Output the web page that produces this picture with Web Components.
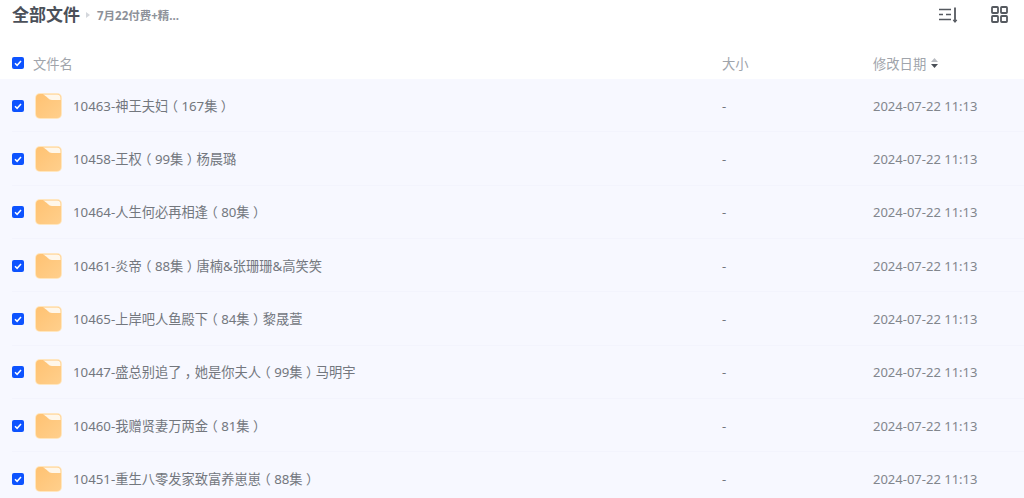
<!DOCTYPE html>
<html lang="zh">
<head>
<meta charset="utf-8">
<title>全部文件</title>
<style>
  html, body { margin: 0; height: 498px; overflow: hidden; background: #fff; }
  body { font-family: "Noto Sans", "Noto Sans CJK SC", sans-serif; }
</style>
</head>
<body>
<file-page></file-page>

<script>
const CHECK = `<svg width="12" height="12" viewBox="0 0 12 12" style="display:block">
  <rect width="12" height="12" rx="2" fill="#0d53ff"/>
  <path d="M3 6.2 5.1 8.3 9 3.9" fill="none" stroke="#fff" stroke-width="1.5"/>
</svg>`;

class FileHeader extends HTMLElement {
  constructor() {
    super();
    this.attachShadow({ mode: 'open' });
    this.shadowRoot.innerHTML = `
      <style>
        :host { display: flex; align-items: center; height: 29px; padding: 0 16px 0 12px; color: #454d5a; }
        .title { font-size: 17px; font-weight: 700; color: #4b5059; line-height: 29px; }
        .arrow { width: 0; height: 0; margin: 0 7px 0 6px; border: 3px solid transparent; border-left: 4px solid #d4d7dc; border-right: 0; }
        .crumb { font-size: 11.5px; font-weight: 700; color: #8d9199; }
        .tools { margin-left: auto; display: flex; gap: 33px; align-items: center; }
        svg { display: block; }
      </style>
      <span class="title">全部文件</span>
      <span class="arrow"></span>
      <span class="crumb">7月22付费+精...</span>
      <div class="tools">
        <svg width="19" height="16" viewBox="0 0 19 16" fill="none" stroke="#55595f" stroke-width="1.6">
          <path d="M0 2.5H12M0 7.5H4M7 7.5H12M0 12.5H12"/>
          <path d="M16 0.5V14.5" stroke-width="1.8"/>
          <path d="M14.2 12.8 16 15 17.8 12.8" stroke-width="1.2"/>
        </svg>
        <svg width="17" height="17" viewBox="0 0 17 17" fill="none" stroke="#55595f" stroke-width="1.8">
          <rect x="1" y="1" width="6" height="6" rx="0.8"/>
          <rect x="10" y="1" width="6" height="6" rx="0.8"/>
          <rect x="1" y="10" width="6" height="6" rx="0.8"/>
          <rect x="10" y="10" width="6" height="6" rx="0.8"/>
        </svg>
      </div>`;
  }
}

class FileColumns extends HTMLElement {
  constructor() {
    super();
    this.attachShadow({ mode: 'open' });
    this.shadowRoot.innerHTML = `
      <style>
        :host { display: grid; grid-template-columns: 21px 689px 151px 1fr; align-items: center; height: 32px; padding-left: 12px; font-size: 13.3px; color: #a0a4ab; }
        .sort { display: block; margin-left: 5px; }
        .date { display: flex; align-items: center; }
      </style>
      <span>${CHECK}</span>
      <span>文件名</span>
      <span>大小</span>
      <span class="date">修改日期
        <svg class="sort" width="7" height="10" viewBox="0 0 7 10">
          <path d="M3.5 0 7 4H0Z" fill="#b9bcc2"/>
          <path d="M3.5 10 0 6H7Z" fill="#4a4f57"/>
        </svg>
      </span>`;
  }
}

class FolderIcon extends HTMLElement {
  constructor() {
    super();
    this.attachShadow({ mode: 'open' });
    this.shadowRoot.innerHTML = `
      <style>:host { display: block; width: 27px; height: 26px; } svg { display: block; }</style>
      <svg width="27" height="26" viewBox="0 0 27 26">
        <defs>
          <linearGradient id="body" x1="0" y1="0" x2="1" y2="1">
            <stop offset="0" stop-color="#ffc272"/>
            <stop offset="1" stop-color="#ffcf8c"/>
          </linearGradient>
        </defs>
        <rect x="0" y="0" width="27" height="26" rx="5" fill="#ffe6bf"/>
        <rect x="1" y="1" width="25" height="24" rx="4" fill="url(#body)"/>
        <path d="M8 1.5H22a3.5 3.5 0 0 1 3.5 3.5V7H17C13.5 7 12.5 3.5 8 1.5Z" fill="#fff7ea"/>
      </svg>`;
  }
}

class FileRow extends HTMLElement {
  constructor() {
    super();
    this.attachShadow({ mode: 'open' });
    this.shadowRoot.innerHTML = `
      <style>
        :host { display: grid; grid-template-columns: 23px 38px 649px 151px 1fr; align-items: center; height: 53.33px; padding-left: 12px; font-size: 13px; color: #73777e; box-sizing: border-box; position: relative; }
        :host::after { content: ""; position: absolute; left: 12px; right: 0; bottom: 0; height: 1px; background: #f3f4fd; }
        .name { font-size: 13.25px; padding-bottom: 1px; }
        ::slotted(span) { font-feature-settings: "halt"; margin: 0 3.3px; }
        .date { color: #82868d; }
      </style>
      <span>${CHECK}</span>
      <folder-icon></folder-icon>
      <span class="name"><slot></slot></span>
      <span>-</span>
      <span class="date">${this.getAttribute('date')}</span>`;
  }
}

class FilePage extends HTMLElement {
  constructor() {
    super();
    this.attachShadow({ mode: 'open' });
    const names = [
      '10463-神王夫妇（167集）',
      '10458-王权（99集）杨晨璐',
      '10464-人生何必再相逢（80集）',
      '10461-炎帝（88集）唐楠&张珊珊&高笑笑',
      '10465-上岸吧人鱼殿下（84集）黎晟萱',
      '10447-盛总别追了，她是你夫人（99集）马明宇',
      '10460-我赠贤妻万两金（81集）',
      '10451-重生八零发家致富养崽崽（88集）'
    ];
    // fullwidth marks sit centred in the em in the original, so they get a span
    const rows = names.map(n => {
      const marked = n.replace(/[（），]/g, '<span>$&</span>');
      return `<file-row date="2024-07-22 11:13">${marked}</file-row>`;
    }).join('');
    this.shadowRoot.innerHTML = `
      <style>
        :host { display: block; height: 498px; overflow: hidden; }
        .head { padding-bottom: 18px; }
        .list { background: #f7f8ff; }
      </style>
      <div class="head"><file-header></file-header></div>
      <file-columns></file-columns>
      <div class="list">${rows}</div>`;
  }
}

customElements.define('file-header', FileHeader);
customElements.define('file-columns', FileColumns);
customElements.define('folder-icon', FolderIcon);
customElements.define('file-row', FileRow);
customElements.define('file-page', FilePage);
</script>
</body>
</html>
